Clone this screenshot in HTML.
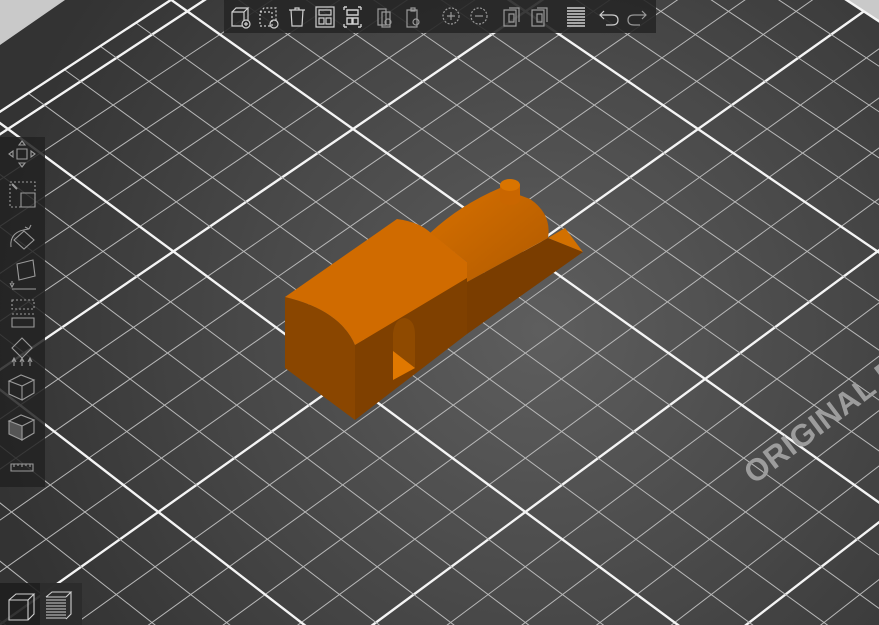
<!DOCTYPE html>
<html><head><meta charset="utf-8"><style>
html,body{margin:0;padding:0;width:879px;height:625px;overflow:hidden;background:#3a3a3a;font-family:"Liberation Sans",sans-serif}
svg{position:absolute;left:0;top:0;overflow:hidden}
</style></head><body>
<svg id="s" width="879" height="625" viewBox="0 0 879 625">
<defs>
<radialGradient id="bg" cx="540" cy="330" r="560" gradientUnits="userSpaceOnUse">
<stop offset="0" stop-color="#5e5e5e"/><stop offset="0.55" stop-color="#474747"/><stop offset="1" stop-color="#333"/>
</radialGradient>
<linearGradient id="roof" x1="0" y1="0" x2="1" y2="1">
<stop offset="0" stop-color="#d77000"/><stop offset="1" stop-color="#b05a00"/>
</linearGradient>
</defs>
<rect width="879" height="625" fill="url(#bg)"/>
<polygon points="0,0 65,0 0,45" fill="#c9c9c9"/>
<polygon points="846,0 879,0 879,22" fill="#c9c9c9"/>
<g id="grid"></g>
<text x="0" y="0" transform="translate(754,485) rotate(-37)" font-family="Liberation Sans" font-weight="bold" font-size="31" fill="#9c9c9c" letter-spacing="0.5">ORIGINAL PRUSA</text>
<g>
<polygon points="467,282 548,238 583,252 467,334" fill="#7a3d00"/>
<path d="M430,233 Q460,205 500,188 L530,199 Q552,214 548,238 L467,282 L467,262 Z" fill="url(#roof)"/>
<polygon points="548,238 565,228 583,252" fill="#d27000"/>
<rect x="500" y="185" width="20" height="15" fill="#c96600"/>
<ellipse cx="510" cy="200" rx="10" ry="5" fill="#c96600"/>
<ellipse cx="510" cy="185" rx="10" ry="6" fill="#d97400"/>
<polygon points="355,345 467,276 467,334 355,420" fill="#7f4000"/>
<path d="M285,297 Q340,310 355,345 L355,420 L285,368 Z" fill="#8a4600"/>
<path d="M285,297 L397,219 Q420,222 432,234 L467,262 L467,278 L355,345 Q340,310 285,297 Z" fill="#d06b00"/>
<path d="M393,380 L393,333 Q395,318 405,318 Q415,320 415,335 L415,368 Z" fill="#8f4a00"/>
<polygon points="393,351 415,368 393,380" fill="#e07800"/>
</g>
<rect x="224" y="0" width="432" height="33" fill="#262626" opacity="0.9"/>
<g fill="none" stroke="#cfcfcf" stroke-width="1.2">
<path d="M232,12 h12 v14 h-12 z M232,12 l4,-4 h12 l-4,4 M248,8 v14 l-4,4"/><circle cx="246" cy="24" r="4" fill="#262626"/><path d="M244,24 h4 M246,22 v4"/>
<path stroke-dasharray="2,2" d="M260,12 h12 v14 h-12 z M260,12 l4,-4 h12 v14"/><circle cx="274" cy="24" r="4"/>
<path d="M289,10 h16 M295,10 v-2 h4 v2 M291,10 l1,16 h10 l1,-16"/>
<path d="M316,7 h18 v20 h-18 z M319,10 h12 v5 h-12 z M319,18 h5 v6 h-5 z M326,18 h5 v6 h-5 z"/>
<path d="M344,7 v3 M344,7 h3 M361,7 h-3 M361,7 v3 M344,27 v-3 M344,27 h3 M361,27 h-3 M361,27 v-3 M347,10 h11 v5 h-11 z M347,18 h5 v6 h-5 z M353,18 h5 v6 h-5 z" stroke-width="1.4"/>
<path d="M378,9 h8 v16 h-8 z M382,12 h8 v15 h-8 z" stroke="#999"/><circle cx="388" cy="22" r="3" stroke="#999"/>
<path d="M407,10 h10 v17 h-10 z M411,8 h4 v3 h-4 z" stroke="#999"/><circle cx="416" cy="22" r="3" stroke="#999"/>
<circle cx="451" cy="16" r="8" stroke="#999" stroke-dasharray="2,1.5"/><path d="M447,16 h8 M451,12 v8" stroke="#999"/>
<circle cx="479" cy="16" r="8" stroke="#999" stroke-dasharray="2,1.5"/><path d="M475,16 h8" stroke="#999"/>
<path d="M504,10 h12 v16 h-12 z M509,8 h10 v14" stroke="#999"/><path d="M509,14 h5 v8 h-5 z" stroke="#999"/>
<path d="M532,10 h12 v16 h-12 z M537,8 h10 v14" stroke="#999"/><path d="M537,14 h5 v8 h-5 z" stroke="#999"/>
<path d="M567,8 h18 M567,11 h18 M567,14 h18 M567,17 h18 M567,20 h18 M567,23 h18 M567,26 h18" stroke-width="1.6"/>
<path d="M604,11 l-4,4 l4,4 M600,15 h12 q6,0 6,5 q0,5 -6,5 h-6"/>
<path d="M642,11 l4,4 l-4,4 M646,15 h-12 q-6,0 -6,5 q0,5 6,5 h6" stroke="#999"/>
</g>
<rect x="0" y="137" width="45" height="350" fill="#222" opacity="0.85"/>
<g fill="none" stroke="#9a9a9a" stroke-width="1.1">
<path d="M17,149 h10 v10 h-10 z M22,141 l3,4 h-6 z M22,167 l3,-4 h-6 z M9,154 l4,-3 v6 z M35,154 l-4,-3 v6 z"/>
<path stroke-dasharray="2,2" d="M10,182 h25 v25 h-25 z"/><path d="M21,193 h14 v14 h-14 z"/><path d="M12,184 l5,5" stroke-width="2"/>
<path d="M11,247 q-2,-16 18,-18 M29,229 l2,-4 M29,229 l-4,-2 M14,240 l10,-9 l10,9 l-10,9 z"/>
<path d="M17,264 l16,-4 l2,16 l-16,4 z M12,289 h24 M12,284 v-3 M10,283 l2,4 l2,-4"/>
<path d="M12,300 h22 v9 h-22 z M12,314 h22" stroke-dasharray="2,2"/><path d="M12,318 h22 v9 h-22 z"/>
<path d="M22,338 l10,10 l-10,10 l-10,-10 z M14,358 v8 M22,358 v8 M30,358 v8 M12,362 l2,-4 l2,4 M20,362 l2,-4 l2,4 M28,362 l2,-4 l2,4"/>
<path d="M9,381 l12,-6 l13,5 l-12,6 z M9,381 v13 l13,6 v-14 M34,380 v13 l-12,7"/>
<path d="M9,421 l12,-6 l13,5 l-12,6 z M34,420 v13 l-12,7 v-14" /><path d="M9,421 v13 l13,6 v-14 z" fill="#555"/>
<path d="M11,464 h22 v7 h-22 z M14,464 v3 M18,464 v2 M22,464 v3 M26,464 v2 M30,464 v3"/>
</g>
<rect x="0" y="583" width="82" height="42" fill="#1e1e1e" opacity="0.9"/>
<rect x="40" y="583" width="42" height="42" fill="#2e2e2e" opacity="0.9"/>
<g fill="none" stroke="#d0d0d0" stroke-width="1.1">
<path d="M9,600 h19 v20 h-19 z M9,600 l7,-6 h18 l-6,6 M34,594 v20 l-6,6"/>
<path d="M46,597 h20 M46,600 h20 M46,603 h20 M46,606 h20 M46,609 h20 M46,612 h20 M46,615 h20 M46,618 h20 M46,597 l6,-5 h19 l-5,5 M71,592 v22 l-5,5"/>
</g>
</svg>
<script>
(function(){
var A=[353,129],u=[169,120],v=[-176,120],k=0.02;
function P(i,j){var w=1-k*(i+j);return [A[0]+(i*u[0]+j*v[0])/w,A[1]+(i*u[1]+j*v[1])/w];}
var g=document.getElementById('grid'),h='';
function L(a,b,maj){h+='<line x1="'+a[0].toFixed(1)+'" y1="'+a[1].toFixed(1)+'" x2="'+b[0].toFixed(1)+'" y2="'+b[1].toFixed(1)+'" stroke="'+(maj?'#f4f4f4':'#b8b8b8')+'" stroke-width="'+(maj?2.4:1)+'"/>';}
var I0=-1.1,I1=5,J0=-2,J1=8;
for(var n=-5;n<=25;n++){var i=n*0.2;if(i<I0||i>I1)continue;L(P(i,J0),P(i,J1),n%5==0);}
for(var n=-10;n<=40;n++){var j=n*0.2;if(j<J0||j>J1)continue;L(P(I0,j),P(I1,j),n%5==0);}
L(P(I0,J0),P(I0,J1),true);
g.innerHTML=h;
})();
</script>
</body></html>
